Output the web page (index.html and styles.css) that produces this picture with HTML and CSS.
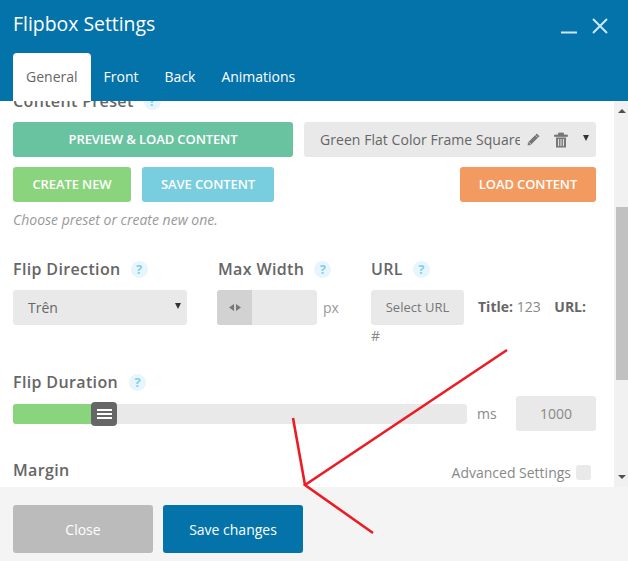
FILE: index.html
```html
<!DOCTYPE html>
<html lang="en">
<head>
<meta charset="utf-8">
<title>Flipbox Settings</title>
<link rel="stylesheet" href="styles.css">
</head>
<body>
<div class="modal">
  <header class="head">
    <div class="head-top">
      <h1 class="title">Flipbox Settings</h1>
      <div class="win-btns">
        <svg class="win-min" width="16" height="3" viewBox="0 0 16 3"><rect width="16" height="2" y="0.5" fill="#cfe6f2"/></svg>
        <svg class="win-close" width="16" height="16" viewBox="0 0 16 16"><path d="M1 1L15 15M15 1L1 15" stroke="#cfe6f2" stroke-width="2" fill="none"/></svg>
      </div>
    </div>
    <nav class="tabs">
      <a class="tab tab-active">General</a>
      <a class="tab">Front</a>
      <a class="tab">Back</a>
      <a class="tab">Animations</a>
    </nav>
  </header>

  <div class="body">
    <main class="content">
      <div class="heading preset-heading"><span class="label">Content Preset</span><span class="help">?</span></div>

      <div class="row row-preset">
        <button class="btn btn-teal btn-preview">PREVIEW &amp; LOAD CONTENT</button>
        <div class="preset-select">
          <span class="preset-name">Green Flat Color Frame Square</span>
          <svg class="ico-pencil" width="15" height="15" viewBox="0 0 15 15"><path d="M10.8 1.2L13.8 4.2L5 13L1 14L2 10ZM9.6 3.4L11.6 5.4M3 10.2L4.8 12" fill="#777" stroke="#eaeaea" stroke-width="0.7"/></svg>
          <svg class="ico-trash" width="14" height="16" viewBox="0 0 14 16"><path d="M0.5 3H13.5V4.4H0.5ZM4.5 3V1H9.5V3" fill="#777" stroke="#777" stroke-width="0.8"/><path d="M2 5.5H12V15.5H2Z" fill="#777"/><path d="M4.6 7V14M7 7V14M9.4 7V14" stroke="#eaeaea" stroke-width="1"/></svg>
          <span class="caret caret-dark"></span>
        </div>
      </div>

      <div class="row row-actions">
        <button class="btn btn-green btn-create">CREATE NEW</button>
        <button class="btn btn-blue btn-save">SAVE CONTENT</button>
        <button class="btn btn-orange btn-load">LOAD CONTENT</button>
      </div>

      <p class="hint">Choose preset or create new one.</p>

      <section class="fields">
        <div class="field field-dir">
          <div class="heading"><span class="label">Flip Direction</span><span class="help">?</span></div>
          <div class="select"><span>Trên</span><span class="caret caret-dark"></span></div>
        </div>
        <div class="field field-width">
          <div class="heading"><span class="label">Max Width</span><span class="help">?</span></div>
          <div class="stepper-row">
            <div class="stepper">
              <span class="stepper-ico">
                <svg width="14" height="7" viewBox="0 0 14 7"><path d="M6 0V7L1 3.5ZM8 0V7L13 3.5Z" fill="#777"/></svg>
              </span>
            </div>
            <span class="unit">px</span>
          </div>
        </div>
        <div class="field field-url">
          <div class="heading"><span class="label">URL</span><span class="help">?</span></div>
          <div class="url-flow"><span class="url-btn">Select URL</span><b class="meta-first">Title:</b> 123 <b class="meta-second">URL:</b> #</div>
        </div>
      </section>

      <section class="duration">
        <div class="heading"><span class="label">Flip Duration</span><span class="help">?</span></div>
        <div class="slider-row">
          <div class="slider">
            <div class="slider-fill"></div>
            <div class="slider-handle"><i></i><i></i><i></i></div>
          </div>
          <span class="unit-ms">ms</span>
          <div class="num">1000</div>
        </div>
      </section>

      <section class="margin-row">
        <span class="label">Margin</span>
        <div class="adv"><span>Advanced Settings</span><span class="check"></span></div>
      </section>
    </main>

    <aside class="scrollbar">
      <span class="sb-up"></span>
      <div class="sb-thumb"></div>
      <span class="sb-down"></span>
    </aside>
  </div>

  <footer class="foot">
    <button class="btn-foot btn-close">Close</button>
    <button class="btn-foot btn-primary">Save changes</button>
  </footer>

  <svg class="scribble" width="628" height="561" viewBox="0 0 628 561">
    <path d="M507 350L305 485L373 533M293 418L305 485" fill="none" stroke="#ed1c24" stroke-width="2.6"/>
  </svg>
</div>
</body>
</html>
```
FILE: styles.css
```css
* { box-sizing: border-box; }
html, body { margin: 0; padding: 0; }
body { font-family: "Open Sans", "Liberation Sans", sans-serif; background: #fff; color: #666; }
.modal { position: relative; width: 628px; height: 561px; display: flex; flex-direction: column; overflow: hidden; }

.head { height: 101px; background: #0473aa; padding: 0 13px; display: flex; flex-direction: column; justify-content: space-between; flex: none; position: relative; z-index: 2; }
.head-top { display: flex; justify-content: space-between; align-items: flex-start; padding-top: 10px; }
.title { margin: 0; font-size: 19.4px; line-height: 28px; font-weight: 400; color: #fff; }
.win-btns { display: flex; align-items: flex-start; gap: 14px; padding-right: 7px; padding-top: 8px; }
.win-min { margin-top: 13px; margin-right: 1px; }
.tabs { display: flex; }
.tab { height: 48px; line-height: 48px; font-size: 14px; color: #fff; padding: 0 13px; }
.tab-active { background: #fff; color: #666; border-radius: 4px 4px 0 0; }

.body { height: 386px; flex: none; display: flex; overflow: hidden; background: #fff; }
.content { width: 614px; flex: none; padding: 0 18px 0 13px; margin-top: -12px; }
.scrollbar { width: 14px; flex: none; background: #f1f1f1; position: relative; padding-left: 2px; display: flex; flex-direction: column; }
.sb-up, .sb-down { position: absolute; left: 4px; width: 0; height: 0; border-left: 4px solid transparent; border-right: 4px solid transparent; }
.sb-up { top: 8px; border-bottom: 4px solid #505050; }
.sb-down { bottom: 8px; border-top: 4px solid #505050; }
.sb-thumb { margin-top: 106px; height: 173px; background: #c1c1c1; }

.heading { display: flex; align-items: center; height: 24px; }
.label { font-size: 16px; line-height: 24px; font-weight: 600; color: #666; letter-spacing: 0.36px; }
.help { width: 17px; height: 17px; border-radius: 50%; background: #e6f6fc; color: #7fd0ea; font-size: 13px; font-weight: 700; line-height: 17px; text-align: center; margin-left: 10px; }
.duration .help { margin-left: 11px; }

.row { display: flex; }
.row-preset { margin-top: 9px; gap: 11px; }
.row-actions { margin-top: 10px; gap: 11px; }
.btn { height: 35px; border: 0; border-radius: 3px; color: #fff; font: 600 13px/35px "Open Sans", sans-serif; padding: 0; text-align: center; letter-spacing: -0.1px; }
.btn-teal { background: #69c3a1; }
.btn-green { background: #8bd47e; }
.btn-blue { background: #78cdde; }
.btn-orange { background: #f39a60; }
.btn-preview { width: 280px; }
.btn-create { width: 118px; }
.btn-save { width: 132px; }
.btn-load { width: 136px; margin-left: auto; }

.preset-select { width: 292px; height: 35px; background: #e9e9e9; border-radius: 3px; display: flex; align-items: center; padding-left: 16px; }
.preset-name { width: 200px; flex: none; white-space: nowrap; overflow: hidden; font-size: 14px; color: #666; letter-spacing: 0.05px; }
.ico-pencil { margin-left: 6px; }
.ico-trash { margin-left: 13px; }
.caret { width: 0; height: 0; border-left: 3.5px solid transparent; border-right: 3.5px solid transparent; border-top: 6px solid #333; }
.preset-select .caret { margin-left: 15px; margin-top: -4px; }

.hint { margin: 9px 0 0; font-size: 14px; line-height: 18px; font-style: italic; color: #999; }

.fields { display: flex; margin-top: 28px; }
.field-dir { width: 205px; }
.field-width { width: 153px; }
.field-url { width: 225px; }
.fields .heading { height: 24px; margin-bottom: 9px; }
.select { width: 174px; height: 35px; background: #e9e9e9; border-radius: 3px; display: flex; align-items: center; justify-content: space-between; padding: 0 6px 0 15px; font-size: 14px; color: #666; }
.select .caret { margin-top: -4px; }
.stepper-row { display: flex; align-items: center; margin-left: -1px; }
.stepper { width: 100px; height: 35px; background: #e9e9e9; border-radius: 3px; overflow: hidden; }
.stepper-ico { width: 35px; height: 35px; background: #d2d2d2; display: flex; align-items: center; justify-content: center; }
.unit { font-size: 14px; color: #999; margin-left: 6px; }
.url-flow { font-size: 14px; line-height: 22px; color: #888; }
.url-btn { display: inline-block; width: 93px; height: 35px; line-height: 34px; background: #e9e9e9; border-radius: 3px; text-align: center; font-size: 13px; color: #777; }
.url-flow b { font-weight: 700; color: #666; }
.meta-first { margin-left: 14px; }
.meta-second { margin-left: 10px; }

.duration { margin-top: 23px; }
.slider-row { display: flex; align-items: center; margin-top: 2px; }
.slider { position: relative; width: 454px; height: 20px; background: #e9e9e9; border-radius: 3px; }
.slider-fill { width: 80px; height: 20px; background: #8bd47e; border-radius: 3px 0 0 3px; }
.slider-handle { position: absolute; left: 78px; top: -2px; width: 26px; height: 24px; background: #666; border-radius: 4px; display: flex; flex-direction: column; align-items: center; justify-content: center; gap: 2px; }
.slider-handle i { display: block; width: 15px; height: 2px; background: #fff; }
.unit-ms { font-size: 14px; color: #888; margin-left: 10px; }
.num { width: 80px; height: 35px; margin-left: auto; background: #e9e9e9; border-radius: 3px; text-align: center; font-size: 14px; line-height: 35px; color: #888; }

.margin-row { display: flex; justify-content: space-between; align-items: flex-start; margin-top: 27px; }
.adv { display: flex; align-items: center; gap: 5px; font-size: 14px; color: #888; margin-right: 5px; margin-top: 5px; }
.check { width: 15px; height: 15px; background: #e9e9e9; border-radius: 3px; }

.foot { flex: 1; background: #f4f4f4; padding: 18px 13px 0; display: flex; gap: 10px; align-items: flex-start; }
.btn-foot { width: 140px; height: 48px; border: 0; border-radius: 3px; color: #fff; font: 500 14px "Open Sans", sans-serif; padding: 0; }
.btn-close { background: #bbb; }
.btn-primary { background: #0473aa; }

.scribble { position: absolute; left: 0; top: 0; z-index: 3; pointer-events: none; }
```
